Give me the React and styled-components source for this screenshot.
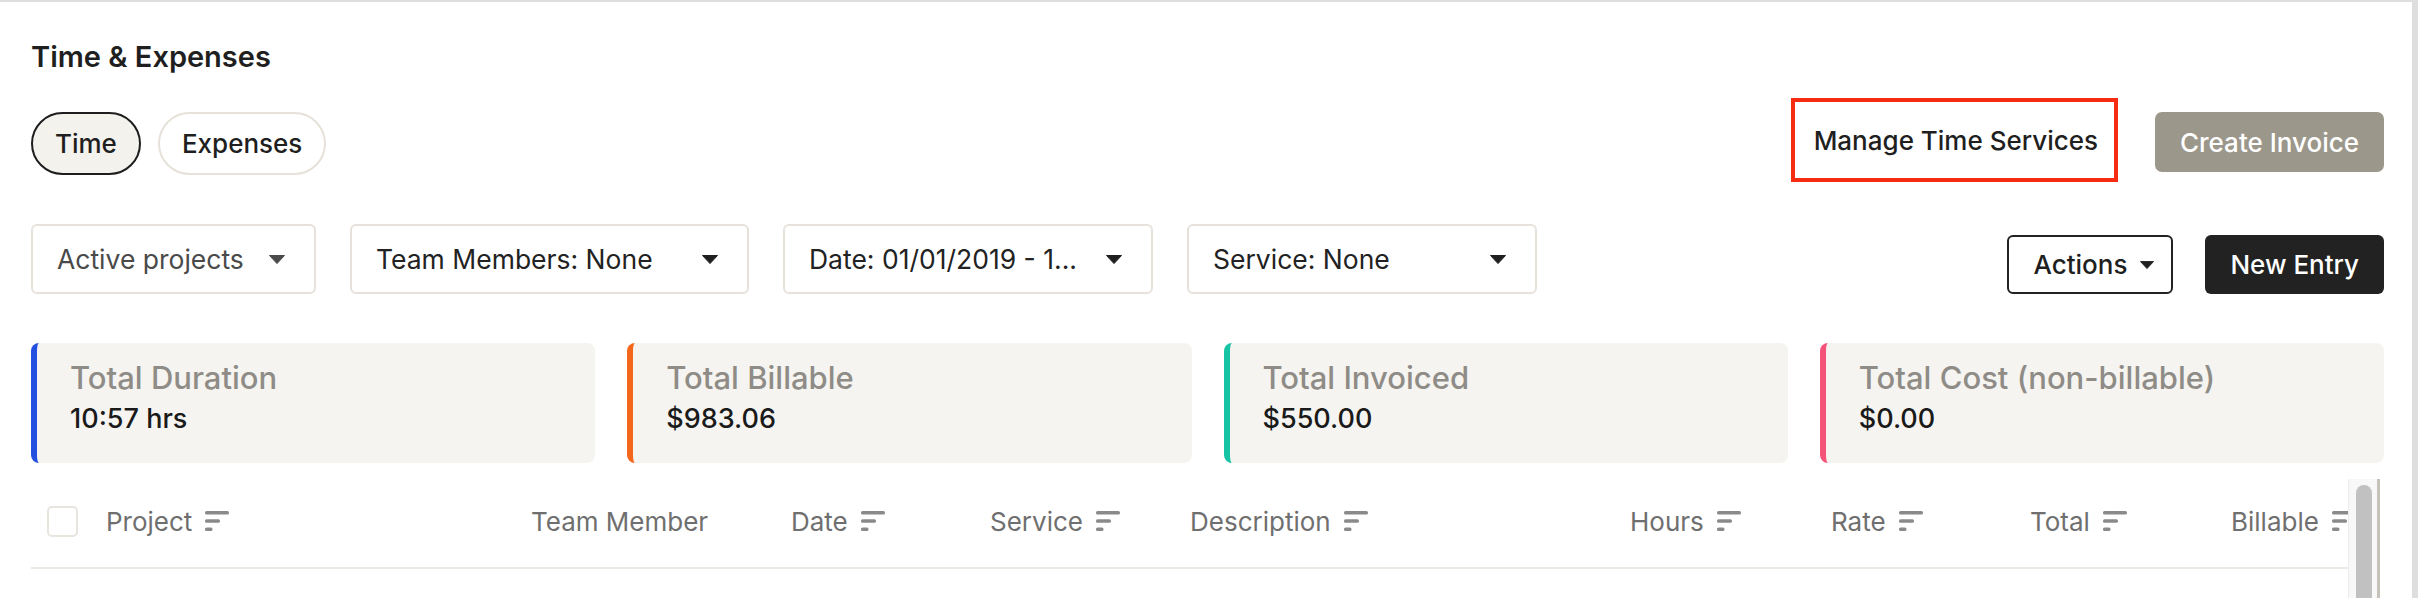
import React from 'react';
import styled, { createGlobalStyle } from 'styled-components';

const GlobalStyle = createGlobalStyle`
  html, body {
    margin: 0;
    padding: 0;
    overflow: hidden;
    background: #dedede;
  }
  body {
    font-family: Inter, "Liberation Sans", sans-serif;
    color: #1f1f1f;
  }
  * {
    box-sizing: border-box;
  }
  button {
    font-family: inherit;
    cursor: pointer;
  }
`;

const Panel = styled.main`
  margin: 2px 6px 0 0;
  height: calc(100vh - 2px);
  background: #fff;
  padding: 38px 28px 0 31px;
  overflow: hidden;
`;

const Title = styled.h1`
  margin: 0;
  font-size: 29px;
  line-height: 34px;
  font-weight: 600;
  color: #1f1f1f;
`;

const TopRow = styled.div`
  margin-top: 24px;
  height: 84px;
  display: flex;
  align-items: center;
  justify-content: space-between;
`;

const Tabs = styled.div`
  display: flex;
  gap: 17px;
  margin-top: 7px;
`;

const Tab = styled.button`
  height: 63px;
  padding: 0 22px;
  border-radius: 32px;
  border: 2px solid ${(p) => (p.$active ? '#1e1e1e' : '#e6e2da')};
  background: ${(p) => (p.$active ? '#f4f2ed' : '#fff')};
  font-size: 26px;
  font-weight: 500;
  color: #1f1f1f;
`;

const HeaderActions = styled.div`
  display: flex;
  align-items: center;
  gap: 37px;
`;

const ManageButton = styled.button`
  height: 84px;
  padding: 0 16px 0 19px;
  border: 4px solid #f52b12;
  background: #fff;
  font-size: 26px;
  font-weight: 500;
  color: #1f1f1f;
`;

const MutedButton = styled.button`
  height: 60px;
  margin-top: 4px;
  padding: 0 25px;
  border: 0;
  border-radius: 7px;
  background: #9c978b;
  color: #fff;
  font-size: 26px;
  font-weight: 500;
`;

const FilterRow = styled.div`
  margin-top: 42px;
  display: flex;
  align-items: flex-end;
  justify-content: space-between;
`;

const Filters = styled.div`
  display: flex;
  gap: 34px;
`;

const Select = styled.button`
  width: ${(p) => p.$w}px;
  height: 70px;
  display: flex;
  align-items: center;
  justify-content: space-between;
  padding: 0 29px 0 24px;
  border: 2px solid #e6e2db;
  border-radius: 6px;
  background: #fff;
  font-size: 26.5px;
  font-weight: 400;
  white-space: nowrap;
  color: ${(p) => (p.$muted ? '#4a4a4a' : '#222')};
`;

const Actions = styled.div`
  display: flex;
  gap: 32px;
`;

const ActionsButton = styled.button`
  height: 59px;
  display: flex;
  align-items: center;
  gap: 13px;
  padding: 0 17px 0 24px;
  border: 2px solid #222;
  border-radius: 6px;
  background: #fff;
  font-size: 26px;
  font-weight: 500;
  color: #1f1f1f;
`;

const PrimaryButton = styled.button`
  height: 59px;
  padding: 0 25px;
  border: 0;
  border-radius: 6px;
  background: #222;
  color: #fff;
  font-size: 26px;
  font-weight: 500;
`;

const Cards = styled.div`
  margin-top: 49px;
  display: grid;
  grid-template-columns: repeat(4, 1fr);
  gap: 32px;
`;

const Card = styled.div`
  height: 120px;
  padding: 16px 20px 0 33px;
  background: #f5f4f0;
  border-left: 6px solid ${(p) => p.$accent};
  border-radius: 8px;
`;

const CardLabel = styled.div`
  font-size: 31px;
  line-height: 38px;
  font-weight: 500;
  color: #8f8c87;
`;

const CardValue = styled.div`
  margin-top: 6px;
  font-size: 27px;
  line-height: 32px;
  font-weight: 500;
  color: #1a1a1a;
`;

const TableArea = styled.div`
  margin: 16px 4px 0 0;
  height: 360px;
  display: flex;
`;

const Table = styled.div`
  flex: 1;
  min-width: 0;
`;

const ScrollTrack = styled.div`
  width: 32px;
  flex-shrink: 0;
  padding: 6px 5px 0 7px;
  background: #f8f8f8;
  border-left: 1px solid #ececec;
  border-right: 3px solid #c6c2ba;
`;

const ScrollThumb = styled.div`
  height: 100%;
  border-radius: 8px;
  background: #c1c1c1;
`;

const HeaderRow = styled.div`
  display: grid;
  grid-template-columns: 75px 425px 260px 199px 200px 440px 201px 199px 201px 1fr;
  align-items: center;
  height: 90px;
  padding-bottom: 4px;
  border-bottom: 2px solid #edebe6;
`;

const CheckCell = styled.div`
  padding-left: 16px;
  display: flex;
  align-items: center;
`;

const Checkbox = styled.span`
  width: 31px;
  height: 31px;
  border: 2px solid #e8e5df;
  border-radius: 5px;
  background: #fff;
`;

const HeaderCell = styled.div`
  display: flex;
  align-items: center;
  gap: 13px;
  font-size: 26px;
  font-weight: 400;
  color: #6f6f6f;
  white-space: nowrap;
`;

const Caret = ({ color = '#1f1f1f', w = 16, h = 9 }) => (
  <svg width={w} height={h} viewBox="0 0 16 9" aria-hidden="true">
    <path d="M0.5 0.5 H15.5 L8 8.6 Z" fill={color} stroke={color} strokeLinejoin="round" />
  </svg>
);

const SortIcon = () => (
  <svg width="24" height="20" viewBox="0 0 24 20" fill="#8a8a8a" aria-hidden="true">
    <rect x="0" y="0" width="24" height="3.5" rx="1.6" />
    <rect x="0" y="8.3" width="15" height="3.5" rx="1.6" />
    <rect x="0" y="16.5" width="7.5" height="3.5" rx="1.6" />
  </svg>
);

const filters = [
  { label: 'Active projects', w: 285, muted: true },
  { label: 'Team Members: None', w: 399 },
  { label: 'Date: 01/01/2019 - 1...', w: 370 },
  { label: 'Service: None', w: 350 },
];

const totals = [
  { label: 'Total Duration', value: '10:57 hrs', accent: '#2350e0' },
  { label: 'Total Billable', value: '$983.06', accent: '#f4661b' },
  { label: 'Total Invoiced', value: '$550.00', accent: '#16c4a5' },
  { label: 'Total Cost (non-billable)', value: '$0.00', accent: '#f5527a' },
];

const headers = [
  { label: 'Project', sort: true },
  { label: 'Team Member', sort: false },
  { label: 'Date', sort: true },
  { label: 'Service', sort: true },
  { label: 'Description', sort: true },
  { label: 'Hours', sort: true },
  { label: 'Rate', sort: true },
  { label: 'Total', sort: true },
  { label: 'Billable', sort: true },
];

const App = () => {
  return (
    <>
      <GlobalStyle />
      <Panel>
        <Title>Time &amp; Expenses</Title>

        <TopRow>
          <Tabs>
            <Tab $active>Time</Tab>
            <Tab>Expenses</Tab>
          </Tabs>
          <HeaderActions>
            <ManageButton>Manage Time Services</ManageButton>
            <MutedButton>Create Invoice</MutedButton>
          </HeaderActions>
        </TopRow>

        <FilterRow>
          <Filters>
            {filters.map((f) => (
              <Select key={f.label} $w={f.w} $muted={f.muted}>
                <span>{f.label}</span>
                <Caret color={f.muted ? '#4a4a4a' : '#1f1f1f'} />
              </Select>
            ))}
          </Filters>
          <Actions>
            <ActionsButton>
              Actions
              <Caret w={14} h={8} />
            </ActionsButton>
            <PrimaryButton>New Entry</PrimaryButton>
          </Actions>
        </FilterRow>

        <Cards>
          {totals.map((t) => (
            <Card key={t.label} $accent={t.accent}>
              <CardLabel>{t.label}</CardLabel>
              <CardValue>{t.value}</CardValue>
            </Card>
          ))}
        </Cards>

        <TableArea>
          <Table>
            <HeaderRow>
              <CheckCell>
                <Checkbox />
              </CheckCell>
              {headers.map((h) => (
                <HeaderCell key={h.label}>
                  {h.label}
                  {h.sort && <SortIcon />}
                </HeaderCell>
              ))}
            </HeaderRow>
          </Table>
          <ScrollTrack>
            <ScrollThumb />
          </ScrollTrack>
        </TableArea>
      </Panel>
    </>
  );
};

export default App;
